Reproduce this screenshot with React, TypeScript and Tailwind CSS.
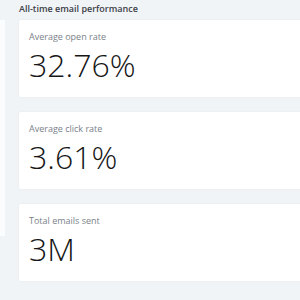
const STATS = [
  { label: 'Average open rate', value: '32.76%' },
  { label: 'Average click rate', value: '3.61%' },
  { label: 'Total emails sent', value: '3M' },
]

export default function App() {
  return (
    <div className="w-[300px] h-[300px] overflow-hidden bg-[#f1f4f7] flex" style={{ fontFamily: '"Open Sans", "Noto Sans", sans-serif' }}>
      {/* edge of the left panel */}
      <div className="w-[5px] shrink-0 pt-[20px]">
        <div className="h-[216px] bg-white/70" />
      </div>

      <div className="flex-1 ml-[14px] flex flex-col">
        <div className="h-[20px] pb-[3px] flex items-center text-[9px] font-semibold text-[#3b4047]">All-time email performance</div>
        <div className="flex flex-col gap-[15px] w-[340px]">
          {STATS.map(s => (
            <div key={s.label} className="h-[77px] bg-white rounded-[2px] shadow-[0_0_3px_rgba(0,0,0,0.05)] pl-[10px] pt-[11.5px]">
              <p className="text-[9px] leading-[9px] text-[#7a818a]">{s.label}</p>
              <p className="text-[32px] leading-[47px] font-light text-[#161616]">{s.value}</p>
            </div>
          ))}
        </div>
      </div>
    </div>
  )
}
